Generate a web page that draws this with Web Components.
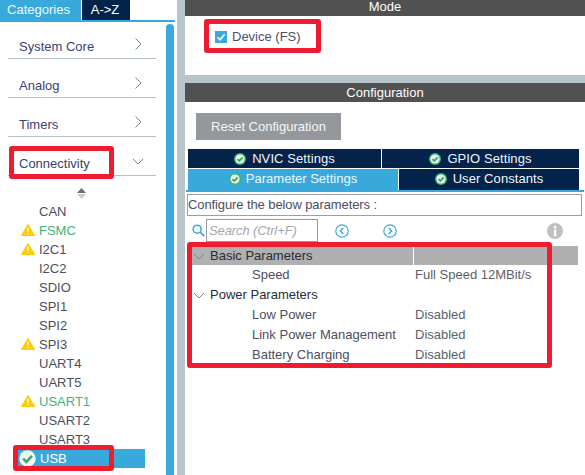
<!DOCTYPE html>
<html><head><meta charset="utf-8">
<style>
html,body{margin:0;padding:0;background:#fff}
body{width:585px;height:475px;overflow:hidden;font-family:"Liberation Sans",Arial,sans-serif;position:relative}
cube-app{--blue:#39a9dc;--navy:#03234b;--dark:#505150;--gray:#b9c4cb;--ink:#464a66}
</style></head>
<body>
<cube-app>
  <cube-sidebar slot="side">
    <cube-category>System Core</cube-category>
    <cube-category>Analog</cube-category>
    <cube-category>Timers</cube-category>
    <cube-category open>Connectivity</cube-category>
    <cube-sort></cube-sort>
    <cube-item>CAN</cube-item>
    <cube-item warn green>FSMC</cube-item>
    <cube-item warn>I2C1</cube-item>
    <cube-item>I2C2</cube-item>
    <cube-item>SDIO</cube-item>
    <cube-item>SPI1</cube-item>
    <cube-item>SPI2</cube-item>
    <cube-item warn>SPI3</cube-item>
    <cube-item>UART4</cube-item>
    <cube-item>UART5</cube-item>
    <cube-item warn green>USART1</cube-item>
    <cube-item>USART2</cube-item>
    <cube-item>USART3</cube-item>
    <cube-item selected>USB</cube-item>
  </cube-sidebar>
  <cube-mode slot="main"></cube-mode>
  <cube-config slot="main"></cube-config>
  <cube-callout style="left:9px;top:146px;width:105px;height:33px"></cube-callout>
  <cube-callout style="left:13px;top:445px;width:101px;height:26px"></cube-callout>
  <cube-callout style="left:204px;top:19px;width:117px;height:34px"></cube-callout>
  <cube-callout style="left:187px;top:242px;width:365px;height:126px"></cube-callout>
</cube-app>
<script>
function def(name, html, proto){
  const t=document.createElement('template'); t.innerHTML=html;
  customElements.define(name, class extends HTMLElement{
    constructor(){super();this.attachShadow({mode:'open'}).appendChild(t.content.cloneNode(true));}
    connectedCallback(){ if(proto) proto.call(this,this.shadowRoot); }
  });
}
const CHECK=`<svg width="12" height="12" viewBox="0 0 12 12" style="display:block"><circle cx="6" cy="6" r="6" fill="#3cb371"/><circle cx="6" cy="6" r="4.6" fill="#e9f6ee"/><path d="M3.4 6.1 5.3 8 8.7 4.3" fill="none" stroke="#3ba86b" stroke-width="1.9"/></svg>`;

def('cube-app',`<style>
:host{display:flex;width:585px;height:475px;overflow:hidden;position:relative}
.side{width:177px;flex:none}
.gap{width:8px;flex:none;background:var(--gray)}
.main{flex:1;display:flex;flex-direction:column;min-width:0}
</style>
<div class="side"><slot name="side"></slot></div><div class="gap"></div><div class="main"><slot name="main"></slot></div><slot></slot>`);

def('cube-sidebar',`<style>
:host{display:block;height:475px;position:relative;overflow:hidden}
.tabs{display:flex;height:20px;font-size:13px;color:#fff;line-height:19px}
.tabs div{text-align:center}
.cat{width:81px;background:var(--blue);color:#eef8fc;box-sizing:border-box;padding-right:4px}
.az{width:48px;margin-left:1px;background:var(--navy);box-sizing:border-box;padding-right:2px}
.rule{height:2px;width:175px;background:var(--blue)}
.body{display:flex;height:453px}
.list{width:166px;box-sizing:border-box}
.bar{width:8px;margin-top:2px;background:var(--blue);border-radius:4px 4px 0 0}
</style>
<div class="tabs"><div class="cat">Categories</div><div class="az">A-&gt;Z</div></div>
<div class="rule"></div>
<div class="body"><div class="list"><slot></slot></div><div class="bar"></div></div>`);

def('cube-category',`<style>
:host{display:flex;box-sizing:border-box;height:39px;margin:0 10px 0 8px;border-bottom:1px solid #b4c0c8;align-items:flex-end;justify-content:space-between;padding:0 12px 4px 11px;font-size:13px}
:host(:first-child){height:37px}
svg{display:block}
span{line-height:15px;color:#3a4272}
</style><span><slot></slot></span><svg width="12" height="12" viewBox="0 0 12 12"></svg>`,function(r){
  const s=r.querySelector('svg');
  s.innerHTML=this.hasAttribute('open')?'<path d="M1 4 6 9 11 4" fill="none" stroke="#7b8288" stroke-width="1"/>':'<path d="M3.5 .5 9 6 3.5 11.5" fill="none" stroke="#7b8288" stroke-width="1"/>';
  s.style.marginBottom=this.hasAttribute('open')?'4px':'4px';
});

def('cube-sort',`<style>
:host{display:flex;justify-content:center;padding:12px 0 0 0;height:14px;margin-left:-3px}
svg{display:block}
</style><svg width="9" height="11" viewBox="0 0 9 11"><path d="M4.5 0 9 5H0z" fill="#6a6e72"/><path d="M0 6h9L4.5 11z" fill="#c8ccd0"/></svg>`);

def('cube-item',`<style>
:host{display:block;height:19px;position:relative;font-size:13px;color:#4c4e60;line-height:19px;padding-left:39px;width:106px}
:host([green]){color:#3fb57a}
:host([selected]){background:var(--blue);color:#fff;margin-left:17px;padding-left:23px;width:105px}
.ic{position:absolute;left:21px;top:3px}
:host([selected]) .ic{left:2px;top:1px}
</style><span class="ic"></span><slot></slot>`,function(r){
  const i=r.querySelector('.ic');
  if(this.hasAttribute('warn')) i.innerHTML='<svg width="14" height="12" viewBox="0 0 14 12" style="display:block"><path d="M7 .5 13.6 11.6H.4z" fill="#fecc00" stroke="#fecc00" stroke-linejoin="round"/><path d="M6.4 3.5h1.2v4.6H6.4zM6.4 9h1.2v1.3H6.4z" fill="#fff"/></svg>';
  if(this.hasAttribute('selected')) i.innerHTML='<svg width="17" height="17" viewBox="0 0 17 17" style="display:block"><circle cx="8.5" cy="8.5" r="8.2" fill="#f4faf6"/><path d="M4.2 8.6 7.4 11.8 13 5.8" fill="none" stroke="#3ba86b" stroke-width="2.6"/></svg>';
});

def('cube-bar',`<style>
:host{display:block;background:var(--dark);color:#fff;text-align:center;font-size:13px}
</style><slot></slot>`);

def('cube-mode',`<style>
:host{display:block;height:75px;flex:none}
cube-bar{height:16px;line-height:14px}
.row{display:flex;align-items:center;gap:5px;padding:13px 0 0 30px;font-size:13px;color:#4c4e68;line-height:15px}
.box{width:12px;height:12px;background:var(--blue);display:block;margin-top:1px}
</style><cube-bar>Mode</cube-bar>
<div class="row"><svg class="box" viewBox="0 0 12 12"><path d="M2.5 6.3 5 8.8 9.6 3.2" fill="none" stroke="#fff" stroke-width="1.5"/></svg><span>Device (FS)</span></div>`);

def('cube-tab',`<style>
:host{display:flex;align-items:center;justify-content:center;gap:6px;background:var(--navy);color:#f2f6fa;font-size:13px;letter-spacing:.08px;box-sizing:border-box;line-height:15px}
:host([active]){background:var(--blue);gap:5px;letter-spacing:0}
</style>${CHECK}<span><slot></slot></span>`);

def('cube-config',`<style>
:host{display:block;flex:1;border-top:8px solid var(--gray);font-size:13px;color:#4c4e60}
cube-bar{height:19px;line-height:19px}
.btn{margin:11px 0 0 11px;width:145px;height:27px;background:#94989c;color:#f6f6f6;font-size:13px;text-align:center;line-height:27px}
.tabs{margin:9px 0 0 3px;width:391px;display:grid;grid-template-columns:193px 1px 16px 1px 180px;grid-template-rows:19px 21px;row-gap:1px}
.t1{grid-column:1}.t2{grid-column:3/6}
.t3{grid-column:1/4}.t4{grid-column:5}
.t3,.t4{padding-bottom:2px}
.rule{height:2px;margin:0 1px;background:var(--blue)}
.conf{box-sizing:border-box;margin:2px 3px 0 2px;height:22px;border:1px solid #98a0a4;font-size:13px;letter-spacing:-.1px;line-height:20px;color:#4c4e60}
.tools{display:flex;align-items:center;height:23px;margin-top:3px;padding:0 0 0 7px}
.in{box-sizing:border-box;width:112px;height:23px;border:1px solid #999;font-style:italic;color:#a4a8ac;font-size:13px;letter-spacing:-.1px;line-height:21px;padding-left:2px;margin-left:1px}
.nav{margin-left:17px;display:block}
.nav.b{margin-left:34px}
.info{margin-left:150px;display:block}
</style><cube-bar>Configuration</cube-bar>
<div class="btn">Reset Configuration</div>
<div class="tabs"><cube-tab class="t1">NVIC Settings</cube-tab><cube-tab class="t2">GPIO Settings</cube-tab><cube-tab class="t3" active>Parameter Settings</cube-tab><cube-tab class="t4">User Constants</cube-tab></div>
<div class="rule"></div>
<div class="conf">Configure the below parameters :</div>
<div class="tools">
<svg width="13" height="13" viewBox="0 0 13 13"><circle cx="5.2" cy="5.2" r="4" fill="none" stroke="#39a9dc" stroke-width="1.6"/><path d="M8.2 8.2 12.2 12.2" stroke="#39a9dc" stroke-width="1.8"/></svg>
<div class="in">Search (Ctrl+F)</div>
<svg class="nav" width="14" height="14" viewBox="0 0 14 14"><circle cx="7" cy="7" r="6.2" fill="none" stroke="#39a9dc" stroke-width="1.2"/><path d="M8.3 4 5.3 7 8.3 10" fill="none" stroke="#39a9dc" stroke-width="1.5"/></svg>
<svg class="nav b" width="14" height="14" viewBox="0 0 14 14"><circle cx="7" cy="7" r="6.2" fill="none" stroke="#39a9dc" stroke-width="1.2"/><path d="M5.7 4 8.7 7 5.7 10" fill="none" stroke="#39a9dc" stroke-width="1.5"/></svg>
<svg class="info" width="16" height="16" viewBox="0 0 16 16"><circle cx="8" cy="8" r="8" fill="#c0c0c0"/><rect x="6.9" y="3" width="2.4" height="2.4" fill="#fff"/><rect x="6.9" y="6.6" width="2.4" height="6.6" fill="#fff"/></svg>
</div>
<cube-table></cube-table>`);

def('cube-row',`<style>
:host{display:grid;grid-template-columns:223px 165px;height:20px;line-height:20px;font-size:13px;color:#4c4e60}
:host([group]){color:#2a2c34}
:host([head]){background:#b0b0b0;height:19px;line-height:19px}
.a{padding-left:62px;white-space:nowrap;position:relative}
:host([group]) .a{padding-left:20px}
.b{padding-left:2px;color:#5c5f68;white-space:nowrap}
:host([head]) .b{border-left:1px solid #fff;padding-left:1px}
svg{position:absolute;left:3px;top:7px}
</style><div class="a"><slot></slot></div><div class="b"></div>`,function(r){
  r.querySelector('.b').textContent=this.getAttribute('value')||'';
  if(this.hasAttribute('group')){
    r.querySelector('.a').insertAdjacentHTML('afterbegin','<svg width="12" height="8" viewBox="0 0 12 8"><path d="M1 1 6 6 11 1" fill="none" stroke="#7b8288" stroke-width="1"/></svg>');
  }
});

def('cube-table',`<style>
:host{display:block;margin:4px 0 0 5px;width:388px}
</style>
<cube-row group head>Basic Parameters</cube-row>
<cube-row value="Full Speed 12MBit/s">Speed</cube-row>
<cube-row group>Power Parameters</cube-row>
<cube-row value="Disabled">Low Power</cube-row>
<cube-row value="Disabled">Link Power Management</cube-row>
<cube-row value="Disabled">Battery Charging</cube-row>`);

def('cube-callout',`<style>
:host{display:block;position:absolute;box-sizing:border-box;border:5px solid #ee1c2e;border-radius:3px;pointer-events:none}
</style>`);
</script>
</body></html>
